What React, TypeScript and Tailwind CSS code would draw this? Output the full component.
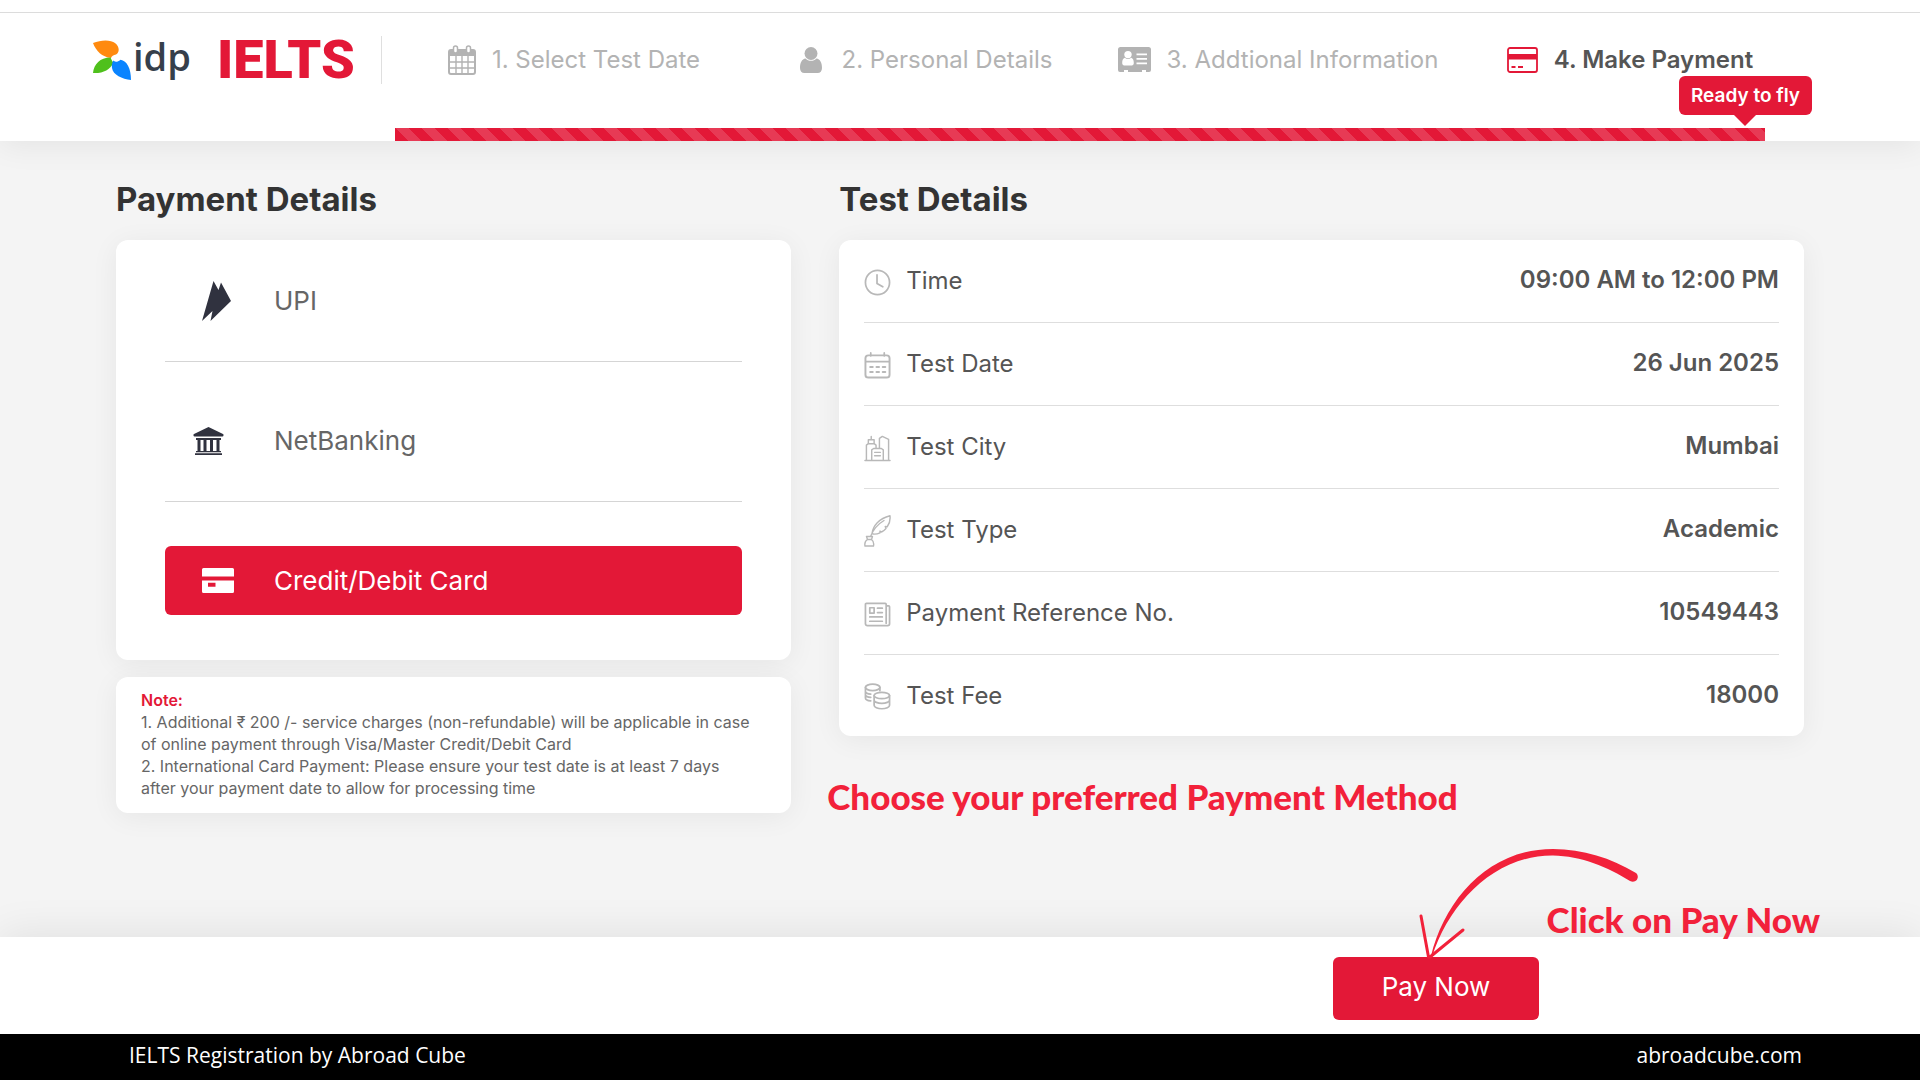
import type { ReactNode } from "react";

const GRAY = "#b3b3b3";

function CalendarGridIcon() {
  return (
    <svg width="28" height="30" viewBox="0 0 28 30" fill="none" aria-hidden="true">
      <rect x="1" y="5" width="26" height="24" rx="2" stroke={GRAY} strokeWidth="2" />
      <path d="M1 6h26v5H1z" fill={GRAY} />
      <path d="M2 17h24M2 23h24M8 11v17M14 11v17M20 11v17" stroke={GRAY} strokeWidth="1.4" />
      <rect x="5.5" y="1" width="4" height="7" rx="2" fill="#fff" stroke={GRAY} strokeWidth="1.5" />
      <rect x="18.5" y="1" width="4" height="7" rx="2" fill="#fff" stroke={GRAY} strokeWidth="1.5" />
    </svg>
  );
}

function PersonIcon() {
  return (
    <svg width="22" height="26" viewBox="0 0 22 26" fill={GRAY} className="mr-1" aria-hidden="true">
      <circle cx="11" cy="6.5" r="6.5" />
      <path d="M5.5 11.5c1.500 1.500 3.300 2.300 5.500 2.300s4-.8 5.500-2.300C20 12 22 15.500 22 21c0 3-1.800 5-4.300 5H4.300C1.800 26 0 24 0 21c0-5.500 2-9 5.500-9.500z" />
    </svg>
  );
}

function IdCardIcon() {
  return (
    <svg width="33" height="26" viewBox="0 0 33 26" aria-hidden="true">
      <path fill={GRAY} d="M2.500 0h28A2.500 2.500 0 0 1 33 2.500V23a2 2 0 0 1-2 2h-3v-2h-4v2H10v-2H6v2H2a2 2 0 0 1-2-2V2.500A2.500 2.500 0 0 1 2.500 0z" />
      <g fill="#fff">
        <circle cx="10" cy="7.600" r="3.700" />
        <path d="M6.800 10.800c2 1.700 4.400 1.700 6.400 0 1.800.5 2.600 2.600 2.600 5.200 0 1.500-.8 2.500-2 2.500H6.200c-1.200 0-2-1-2-2.500 0-2.600.8-4.700 2.600-5.200z" />
        <path d="M18.500 6.500h10.500v1.700H18.500zM18.500 11h10.500v1.700H18.500zM18.500 15.500h10.500v1.700H18.500z" />
      </g>
    </svg>
  );
}

function CardOutlineIcon() {
  return (
    <svg width="31" height="26" viewBox="0 0 31 26" fill="none" aria-hidden="true">
      <rect x="1" y="1" width="29" height="24" rx="2" stroke="#e31837" strokeWidth="1.800" />
      <path d="M1 7h29v5.500H1zM4.500 19h4v2h-4zM11 19h5v2h-5z" fill="#e31837" />
    </svg>
  );
}

function Pinwheel() {
  return (
    <svg width="38" height="40" viewBox="0 0 38 40" aria-hidden="true">
      <path fill="#ff8a0f" d="M0 3C8-.5 18-.5 22 3c5 4 4.500 9.500 1 11.500-2.500.5-4.500 1.500-5 3.500C9 17 3 11 0 3z" />
      <path fill="#4fc01c" d="M0 33c1-9 7-15.500 17.500-15.500 1 2.500 2.300 4.200 2.800 5.500C17 30 10 33.500 0 33z" />
      <path fill="#0a84ff" d="M38 40c-9-1-18-5-19-12-.5-3 0-5.500 1.500-7.500 2 2 4 1.500 7-.8C34 21 38 28 38 40z" />
    </svg>
  );
}

function UpiIcon() {
  return (
    <svg width="30" height="40" viewBox="0 0 30 40" fill="#30323f" aria-hidden="true">
      <path d="M11.500 0L16.500 9 19 1.500 29 20 8.500 40 10.500 30 0 40z" />
    </svg>
  );
}

function BankIcon() {
  return (
    <svg width="31" height="28" viewBox="0 0 31 28" fill="#30323f" aria-hidden="true">
      <path d="M15.500 0L30 7c1 .5.600 2.500-.6 2.500H1.600C.4 9.500 0 7.500 1 7zM3 11h25v2H3zM4.500 13h3v11h-3zM10.500 13h3v11h-3zM17 13h3v11h-3zM23.500 13h3v11h-3zM3 24h25v1.200H3zM2 26.200h27V28H2z" />
    </svg>
  );
}

function CardSolidIcon() {
  return (
    <svg width="32" height="25" viewBox="0 0 32 25" fill="#fff" aria-hidden="true">
      <path d="M1.500 0h29A1.500 1.500 0 0 1 32 1.500V8.500H0v-7A1.500 1.500 0 0 1 1.500 0z" />
      <path fillRule="evenodd" d="M0 12.500h32v11a1.500 1.500 0 0 1-1.500 1.500h-29A1.500 1.500 0 0 1 0 23.500zM6 14.700v4h7.500v-4z" />
    </svg>
  );
}

function LineIcon({ children }: { children: ReactNode }) {
  return (
    <svg
      width="27"
      height="27"
      viewBox="0 0 28 28"
      fill="none"
      stroke="#b8b8b8"
      strokeWidth="1.800"
      strokeLinecap="round"
      strokeLinejoin="round"
      className="mt-0.5 shrink-0"
      aria-hidden="true"
    >
      {children}
    </svg>
  );
}

const steps = [
  { label: "1. Select Test Date", icon: <CalendarGridIcon /> },
  { label: "2. Personal Details", icon: <PersonIcon /> },
  { label: "3. Addtional Information", icon: <IdCardIcon /> },
  { label: "4. Make Payment", icon: <CardOutlineIcon />, active: true },
];

const details = [
  {
    label: "Time",
    value: "09:00 AM to 12:00 PM",
    icon: (
      <LineIcon>
        <circle cx="14" cy="14" r="12.500" />
        <path d="M13.500 6v9l6 3.500" />
      </LineIcon>
    ),
  },
  {
    label: "Test Date",
    value: "26 Jun 2025",
    icon: (
      <LineIcon>
        <rect x="1.500" y="3.500" width="25" height="23" rx="3" strokeWidth="2" />
        <path d="M2 10h24M7 1v3M21 1v3" />
        <path strokeWidth="2.200" d="M6.500 15.500h2.500M13 15.500h2.500M19.500 15.500h2.500M6.500 20.700h2.500M13 20.700h2.500M19.500 20.700h2.500" />
      </LineIcon>
    ),
  },
  {
    label: "Test City",
    value: "Mumbai",
    icon: (
      <LineIcon>
        <path strokeWidth="1.500" d="M1 26.500h26M2.500 26V10.500l2-1.500h6l2 1.500V14M4.500 9V5h6v4M7.500 5V1.500M16 14V3.500l3-2 6.500 3V26M8 26V15.500l2-1.500h8l2 1.500V26M11 18h6M11 21.500h6" />
      </LineIcon>
    ),
  },
  {
    label: "Test Type",
    value: "Academic",
    icon: (
      <svg
        width="27"
        height="32"
        viewBox="0 0 27 32"
        fill="none"
        stroke="#b8b8b8"
        strokeWidth="1.400"
        strokeLinecap="round"
        strokeLinejoin="round"
        className="mt-0.5 shrink-0"
        aria-hidden="true"
      >
        <path d="M8 18.500C9 11 15 3.500 26 .8c.5 4.700-.5 8-2.800 11l-2-.3.8 2c-1.500 1.700-2.500 2.500-4.500 3.500l-1.500-.9v1.700C13.500 19 11 19.300 9 19M6.500 21.500C9.500 14 14 9 20 5.500M2.500 21.500h6l-1 3h-4zM3.500 24.500C1 26 .5 28.500 1 31h8.500c.5-2.500 0-5-2-6.500" />
      </svg>
    ),
  },
  {
    label: "Payment Reference No.",
    value: "10549443",
    icon: (
      <LineIcon>
        <path d="M23 5h2.500c.6 0 1 .4 1 1v17.500a2 2 0 0 1-2 2h-21a2 2 0 0 1-2-2V3.500a1 1 0 0 1 1-1H22a1 1 0 0 1 1 1V23M6 7h4.500v5.500H6zM14 7.500h5M14 12h5M6 16.500h13M6 21h13" />
      </LineIcon>
    ),
  },
  {
    label: "Test Fee",
    value: "18000",
    icon: (
      <LineIcon>
        <ellipse cx="9" cy="4.500" rx="7.500" ry="3.300" />
        <path d="M1.500 4.500v11c0 1.600 2.400 2.800 5.500 3M1.500 8.500c0 1.600 2.400 2.800 5.500 3M1.500 12c0 1.600 2.400 2.800 5.500 3M16.500 4.500v3.500" />
        <ellipse cx="18.500" cy="13" rx="8" ry="3.300" />
        <path d="M10.500 13v10c0 2 3.600 3.700 8 3.700s8-1.700 8-3.700V13M10.500 17.500c0 2 3.600 3.700 8 3.700s8-1.700 8-3.700" />
      </LineIcon>
    ),
  },
];

const methods = [
  { label: "UPI", icon: <UpiIcon />, pad: "pl-[37px]" },
  { label: "NetBanking", icon: <BankIcon />, pad: "pl-7" },
  { label: "Credit/Debit Card", icon: <CardSolidIcon />, pad: "pl-[37px]", selected: true },
];

const cardClass = "rounded-xl bg-white shadow-[0_4px_28px_rgba(0,0,0,0.06)]";

function Header() {
  return (
    <header className="relative z-10 bg-white shadow-[0_4px_30px_rgba(0,0,0,0.07)]">
      <div className="h-3" />
      <div className="flex h-[116px] border-t border-[#dcdcdc] pr-[114px] pl-[93px]">
        <div className="mt-[23px] flex h-12 w-[289px] shrink-0 items-center border-r border-[#dfdfdf]">
          <a href="#home" aria-label="idp IELTS" className="flex items-center">
            <Pinwheel />
            <span className="ml-0.5 h-12 font-['Open_Sans',sans-serif] text-[38px] leading-[40px] font-semibold text-[#363f4b]">idp</span>
            <span className="ml-[26px] font-[Roboto,sans-serif] text-[54px] leading-[48px] font-black text-[#e31837]">IELTS</span>
          </a>
        </div>
        <ol className="ml-4 grid flex-1 grid-cols-4">
          {steps.map((s) => (
            <li
              key={s.label}
              aria-current={s.active ? "step" : undefined}
              className={
                s.active
                  ? "flex h-[94px] items-center justify-center gap-4 text-2xl font-semibold whitespace-nowrap text-[#555]"
                  : "flex h-[94px] items-center justify-center gap-4 text-2xl whitespace-nowrap text-[#b3b3b3]"
              }
            >
              {s.icon}
              {s.label}
            </li>
          ))}
        </ol>
      </div>
      <div className="relative mr-[155px] ml-[395px] h-[13px] bg-[#e31837] bg-[linear-gradient(45deg,rgba(255,255,255,0.15)_25%,transparent_25%,transparent_50%,rgba(255,255,255,0.15)_50%,rgba(255,255,255,0.15)_75%,transparent_75%,transparent)] bg-[length:26px_26px]">
        <div className="absolute right-[-47px] bottom-[26px] rounded-md bg-[#e31837] px-3 text-[19px] leading-[39px] font-semibold whitespace-nowrap text-white">
          Ready to fly
          <span className="absolute top-full left-1/2 -ml-[11px] border-x-[11px] border-t-[11px] border-x-transparent border-t-[#e31837]" />
        </div>
      </div>
    </header>
  );
}

export default function App() {
  return (
    <div className="flex min-h-screen flex-col bg-[#f4f4f4] font-[Inter,sans-serif] text-[#555]">
      <Header />
      <main className="grid flex-1 grid-cols-[7fr_10fr] gap-12 px-[116px] pt-9">
        <section>
          <h2 className="text-[33px] leading-[44px] font-bold text-[#333]">Payment Details</h2>
          <ul className={`${cardClass} mt-[19px] px-[49px] pt-[26px] pb-[45px]`}>
            {methods.map((m) => (
              <li key={m.label} className={m.selected ? "" : "mb-11 border-b border-[#d5d5d5] pb-[26px]"}>
                <button
                  type="button"
                  aria-pressed={!!m.selected}
                  className={
                    m.selected
                      ? "flex h-[69px] w-full items-center rounded-md bg-[#e31837] text-left text-[26px] text-white"
                      : "flex h-[69px] w-full items-center rounded-md text-left text-[26px] text-[#666]"
                  }
                >
                  <span className={`${m.pad} w-[109px] shrink-0`}>{m.icon}</span>
                  {m.label}
                </button>
              </li>
            ))}
          </ul>
          <div className={`${cardClass} mt-[17px] px-[25px] pt-3 pb-3.5 text-base leading-[22px] text-[#666]`}>
            <p className="font-semibold text-[#e31837]">Note:</p>
            <p>
              1. Additional ₹ 200 /- service charges (non-refundable) will be applicable in case
              <br />
              of online payment through Visa/Master Credit/Debit Card
            </p>
            <p>
              2. International Card Payment: Please ensure your test date is at least 7 days
              <br />
              after your payment date to allow for processing time
            </p>
          </div>
        </section>
        <section>
          <h2 className="text-[33px] leading-[44px] font-bold text-[#333]">Test Details</h2>
          <dl className={`${cardClass} mt-[19px] px-[25px]`}>
            {details.map((d, i) => (
              <div
                key={d.label}
                className={
                  i < details.length - 1
                    ? "flex h-[83px] items-center border-b border-[#dedede]"
                    : "flex h-[81px] items-center"
                }
              >
                {d.icon}
                <dt className="ml-[15px] text-2xl">{d.label}</dt>
                <dd className="ml-auto pb-0.5 text-2xl font-semibold">{d.value}</dd>
              </div>
            ))}
          </dl>
          <p className="mt-[38px] -ml-3 font-[Lato,sans-serif] text-[35px] leading-[44px] font-black whitespace-nowrap text-[#f2213a]">
            Choose your preferred Payment Method
          </p>
        </section>
      </main>
      <div className="relative flex h-[97px] items-start justify-end bg-white pt-5 pr-[381px] shadow-[0_-4px_40px_rgba(0,0,0,0.08)]">
        <div className="relative">
          <button type="button" className="block h-[63px] w-[206px] rounded-md bg-[#e31837] pb-1 text-[26px] text-white">
            Pay Now
          </button>
          <svg className="absolute bottom-[59px] left-20" width="232" height="116" viewBox="0 0 232 116" fill="none" aria-hidden="true">
            <path fill="#f2213a" d="M18 111C32 55 75 4 140 4c30 0 58 9 83 24 4 3 1 11-6 8-22-14-49-25-77-25.500C82 10 36 58 19 112z" />
            <path d="M8 71l7.500 41M50 85L17 112" stroke="#f2213a" strokeWidth="3" strokeLinecap="round" />
          </svg>
        </div>
        <p className="absolute -top-10 right-[100px] font-[Lato,sans-serif] text-[35px] leading-[44px] font-black whitespace-nowrap text-[#f2213a]">
          Click on Pay Now
        </p>
      </div>
      <footer className="flex h-[46px] items-center justify-between bg-black pr-[118px] pb-0.5 pl-[129px] font-['Open_Sans',sans-serif] text-[21px] text-white">
        <span>IELTS Registration by Abroad Cube</span>
        <a href="#abroadcube">abroadcube.com</a>
      </footer>
    </div>
  );
}
